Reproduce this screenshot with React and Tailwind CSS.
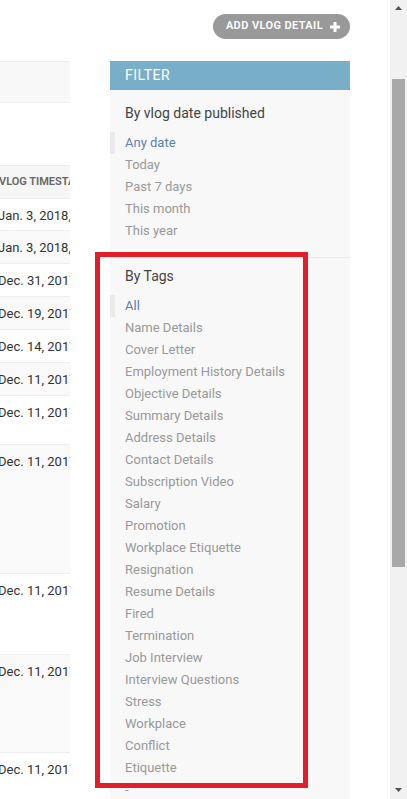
import React from "react";

const dateFilters = ["Any date", "Today", "Past 7 days", "This month", "This year"];

const tagFilters = [
  "All",
  "Name Details",
  "Cover Letter",
  "Employment History Details",
  "Objective Details",
  "Summary Details",
  "Address Details",
  "Contact Details",
  "Subscription Video",
  "Salary",
  "Promotion",
  "Workplace Etiquette",
  "Resignation",
  "Resume Details",
  "Fired",
  "Termination",
  "Job Interview",
  "Interview Questions",
  "Stress",
  "Workplace",
  "Conflict",
  "Etiquette",
  "-",
];

// row heights include the 1px bottom border
const rows = [
  { date: "Jan. 3, 2018, 4:12 p.m.", h: "h-[32px]" },
  { date: "Jan. 3, 2018, 3:40 p.m.", h: "h-[33px]" },
  { date: "Dec. 31, 2017, 9:05 a.m.", h: "h-[33px]" },
  { date: "Dec. 19, 2017, 2:17 p.m.", h: "h-[33px]" },
  { date: "Dec. 14, 2017, 11:30 a.m.", h: "h-[33px]" },
  { date: "Dec. 11, 2017, 6:02 p.m.", h: "h-[33px]" },
  { date: "Dec. 11, 2017, 5:58 p.m.", h: "h-[49px]" },
  { date: "Dec. 11, 2017, 5:51 p.m.", h: "h-[129px]" },
  { date: "Dec. 11, 2017, 5:47 p.m.", h: "h-[81px]" },
  { date: "Dec. 11, 2017, 5:40 p.m.", h: "h-[98px]" },
  { date: "Dec. 11, 2017, 5:33 p.m.", h: "h-[80px]" },
];

function FilterList({ items }) {
  return (
    <ul className="mt-[9px] pb-[15px] border-b border-[#eaeaea]">
      {items.map((item, i) =>
        i === 0 ? (
          <li
            key={item}
            className="border-l-[5px] border-[#eaeaea] pl-[10px] text-[13px] leading-[22px] text-[#5b80b2] whitespace-nowrap"
          >
            {item}
          </li>
        ) : (
          <li
            key={item}
            className="pl-[15px] text-[13px] leading-[22px] text-[#999] whitespace-nowrap"
          >
            {item}
          </li>
        )
      )}
    </ul>
  );
}

export default function App() {
  return (
    <div className="relative flex w-[407px] h-[799px] overflow-hidden bg-white font-['Roboto','Liberation_Sans',sans-serif]">
      <div className="w-[390px] h-full flex flex-col">
        <div className="flex justify-end pr-[40px] pt-[14px]">
          <button
            type="button"
            className="h-[25px] flex items-center rounded-full bg-[#999] pl-[13px] pr-[10px] text-[11px] font-semibold uppercase tracking-[0.4px] text-white"
          >
            Add vlog detail
            <svg width="10" height="10" viewBox="0 0 10 10" className="ml-[7px]">
              <path d="M5 0v10M0 5h10" stroke="white" strokeWidth="3" />
            </svg>
          </button>
        </div>

        <div className="flex mt-[22px] flex-1 min-h-0">
          <div className="w-[70px] overflow-hidden shrink-0">
            <div className="h-[42px] border-y border-[#eee] bg-[#f8f8f8]" />
            <div className="mt-[62px] h-[34px] flex items-center bg-[#f6f6f6] border-y border-[#eee] -ml-[1px] text-[11px] font-semibold uppercase text-[#666] whitespace-nowrap">
              Vlog timestamp
            </div>
            {rows.map((row, i) => (
              <div
                key={i}
                className={`${row.h} -ml-[2px] border-b border-[#eee] pt-[8px] text-[13px] leading-[17px] text-[#333] whitespace-nowrap ${
                  i % 2 === 1 ? "bg-[#f9f9f9]" : "bg-white"
                }`}
              >
                {row.date}
              </div>
            ))}
          </div>

          <aside className="ml-[40px] w-[240px] bg-[#f8f8f8] shrink-0 overflow-hidden">
            <h2 className="h-[29px] px-[15px] flex items-center bg-[#79aec8] text-[14px] uppercase tracking-[0.5px] text-white">
              Filter
            </h2>
            <h3 className="mt-[13px] px-[15px] text-[14px] leading-[20px] text-[#444]">
              By vlog date published
            </h3>
            <FilterList items={dateFilters} />
            <h3 className="mt-[8px] px-[15px] text-[14px] leading-[20px] text-[#444]">
              By Tags
            </h3>
            <FilterList items={tagFilters} />
          </aside>
        </div>
      </div>

      <div className="w-[17px] h-full bg-[#f1f1f1] flex flex-col items-center">
        <svg width="7" height="4" viewBox="0 0 7 4" className="mt-[6px]">
          <path d="M0 4L3.5 0L7 4Z" fill="#505050" />
        </svg>
        <div className="mt-[69px] w-[13px] h-[488px] bg-[#a8a8a8]" />
        <div className="flex-1" />
        <svg width="7" height="4" viewBox="0 0 7 4" className="mb-[7px]">
          <path d="M0 0L3.5 4L7 0Z" fill="#505050" />
        </svg>
      </div>

      <div className="absolute left-[95px] top-[252px] w-[213px] h-[536px] border-[5px] border-[#e31e2a] pointer-events-none" />
    </div>
  );
}
